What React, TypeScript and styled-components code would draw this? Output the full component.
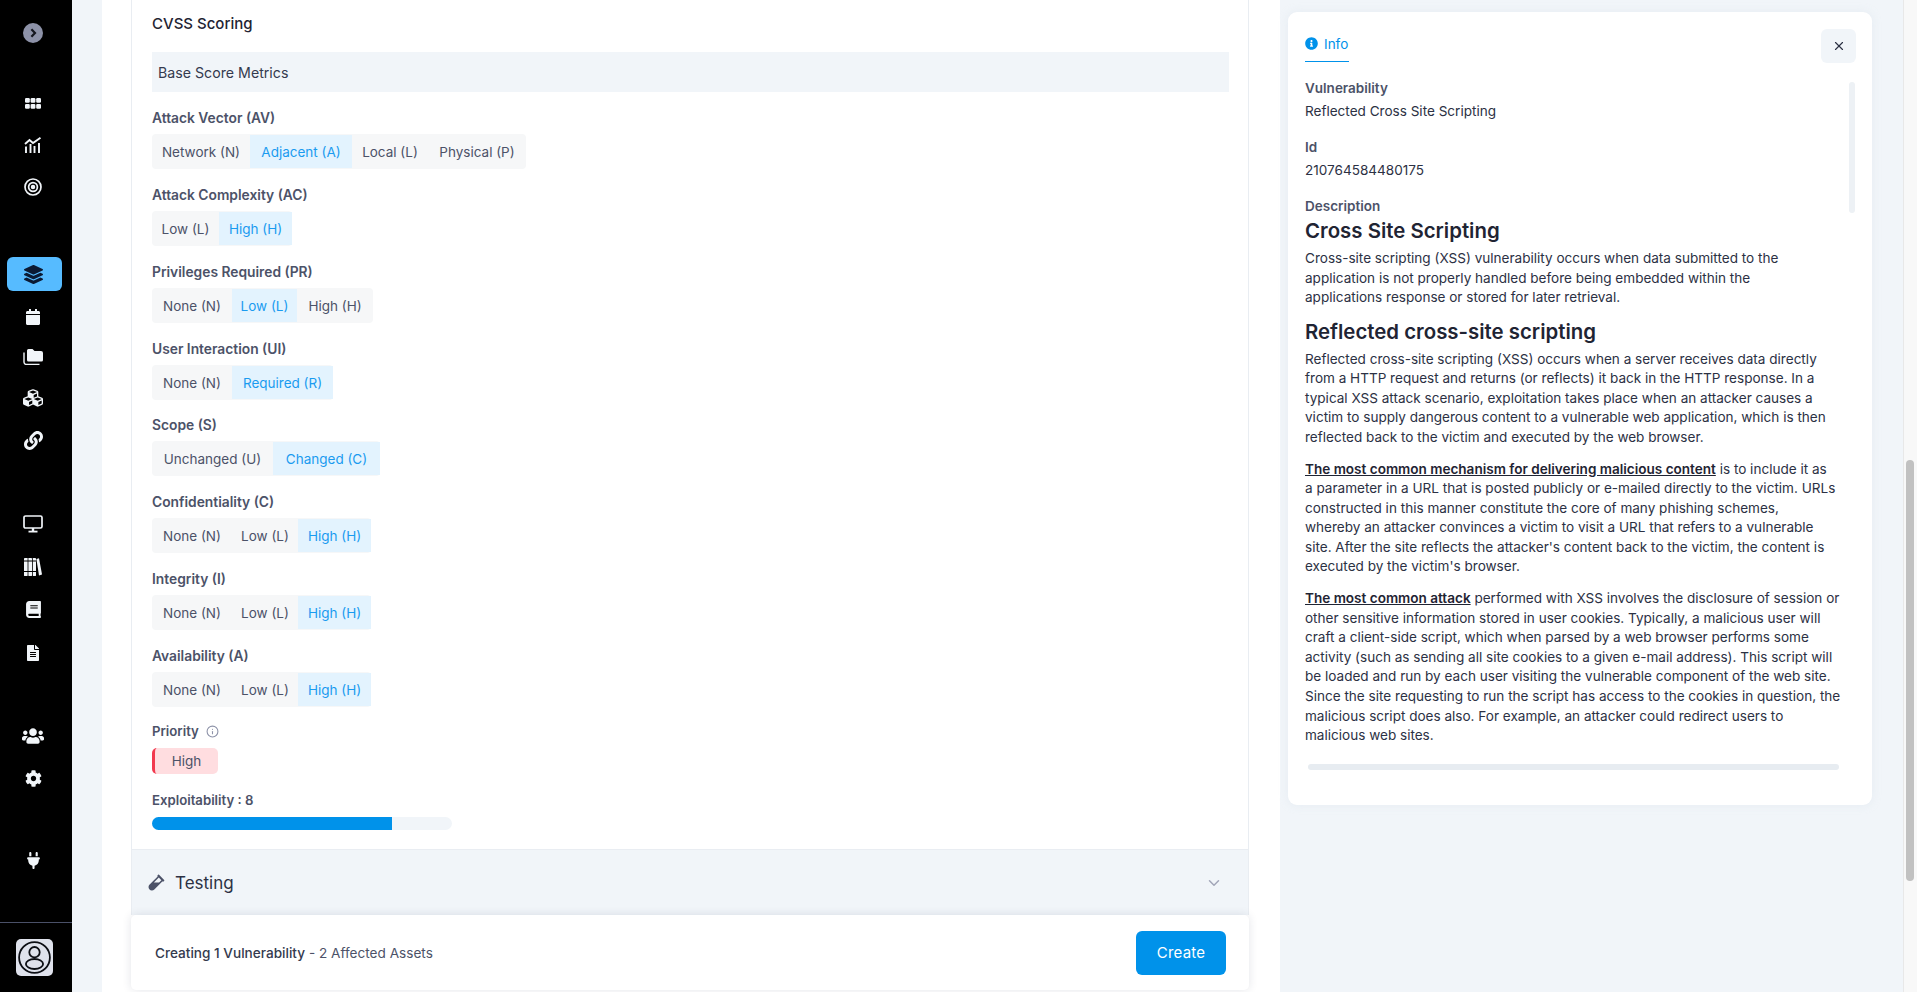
import React from "react";
import styled, { createGlobalStyle } from "styled-components";
import { FaLayerGroup, FaCalendar, FaCubes, FaLink, FaBook, FaFileAlt, FaUsers, FaCog, FaVial, FaInfoCircle } from "react-icons/fa";
import { FaPlug } from "react-icons/fa6";
import { FiChevronDown, FiX, FiInfo } from "react-icons/fi";

const FONT = `"Inter", "Noto Sans", "Liberation Sans", sans-serif`;

const Global = createGlobalStyle`
  html, body { margin: 0; padding: 0; height: 100%; overflow: hidden; background: #f1f5f9; }
  body { font-family: ${FONT}; color: #1f2433; }
  * { box-sizing: border-box; }
`;

const Page = styled.div`
  display: flex;
  width: 1917px;
  height: 992px;
  overflow: hidden;
`;

const Sidebar = styled.nav`
  width: 72px;
  flex: none;
  background: #000;
  display: flex;
  flex-direction: column;
  align-items: center;
  color: #f1f5f9;
`;

const Toggle = styled.div`
  width: 20px;
  height: 20px;
  margin-top: 23px;
  margin-right: 6px;
  border-radius: 50%;
  background: #8d92a8;
  color: #15171f;
  display: flex;
  align-items: center;
  justify-content: center;
  flex: none;
`;

const NavGroup = styled.div<{ $top: number }>`
  margin-top: ${(p) => p.$top}px;
  display: flex;
  flex-direction: column;
  align-items: center;
  width: 100%;
  flex: none;
`;

const NavItem = styled.div<{ $h?: number; $active?: boolean; $gap?: number }>`
  width: 55px;
  height: ${(p) => p.$h ?? 42}px;
  margin-bottom: ${(p) => p.$gap ?? 0}px;
  margin-right: 3px;
  border-radius: 6px;
  background: ${(p) => (p.$active ? "#56bbff" : "transparent")};
  color: ${(p) => (p.$active ? "#0b1a33" : "#f1f5f9")};
  display: flex;
  align-items: center;
  justify-content: center;
  padding-right: 3px;
  flex: none;
`;

const SideFoot = styled.div`
  margin-top: auto;
  width: 100%;
  height: 70px;
  border-top: 1px solid #4a5068;
  display: flex;
  align-items: center;
  justify-content: center;
  flex: none;
`;

const Avatar = styled.div`
  width: 37px;
  height: 37px;
  border-radius: 5px;
  background: #dfe2ec;
  margin-right: 3px;
  display: flex;
  align-items: center;
  justify-content: center;
`;

const Gutter = styled.div`
  width: 30px;
  flex: none;
  background: #f1f5f9;
`;

const Main = styled.main`
  width: 1178px;
  flex: none;
  background: #fff;
  padding-left: 29px;
  height: 992px;
  display: flex;
  flex-direction: column;
`;

const Card = styled.section`
  width: 1118px;
  height: 915px;
  flex: none;
  border: 1px solid #e9edf2;
  border-top: none;
  border-bottom: none;
  display: flex;
  flex-direction: column;
  overflow: hidden;
`;

const Body = styled.div`
  flex: 1;
  padding: 14px 19px 0 20px;
  display: flex;
  flex-direction: column;
  align-items: flex-start;
`;

const Title = styled.h2`
  margin: 0;
  font-size: 15px;
  line-height: 20px;
  font-weight: 500;
  color: #1f2433;
  height: 38px;
`;

const MetricsBar = styled.div`
  width: 100%;
  height: 40px;
  flex: none;
  background: #f1f5f9;
  padding-left: 6px;
  display: flex;
  align-items: center;
  font-size: 14.2px;
  color: #343a4e;
  margin-bottom: 15px;
`;

const Metric = styled.div<{ $h: number }>`
  height: ${(p) => p.$h}px;
  flex: none;
`;

const MetricLabel = styled.div`
  font-size: 13.8px;
  line-height: 22px;
  height: 27px;
  font-weight: 600;
  color: #4c5268;
`;

const Segments = styled.div`
  display: inline-flex;
  background: #f6f7f8;
  border-radius: 4px;
  height: 35px;
  padding: 1px 0;
`;

const Segment = styled.div<{ $on?: boolean; $w: number }>`
  width: ${(p) => p.$w}px;
  display: flex;
  align-items: center;
  justify-content: center;
  font-size: 13.5px;
  white-space: nowrap;
  color: ${(p) => (p.$on ? "#1a9bf0" : "#4c5268")};
  background: ${(p) => (p.$on ? "#e3f3fe" : "transparent")};
`;

const PriorityLabel = styled(MetricLabel)`
  display: flex;
  align-items: center;
  gap: 7px;
  height: 20px;
  margin-top: -1px;
  font-size: 13.2px;
  svg { color: #8d92a8; }
`;

const PriorityBadge = styled.div`
  margin-top: 7px;
  width: 66px;
  height: 26px;
  flex: none;
  border-radius: 5px;
  border-left: 3px solid #f2394e;
  background: #ffdde0;
  display: flex;
  align-items: center;
  justify-content: center;
  font-size: 13.5px;
  color: #4c5268;
`;

const ExploitLabel = styled(MetricLabel)`
  margin-top: 16px;
  font-size: 13.2px;
  line-height: 20px;
`;

const Track = styled.div`
  width: 300px;
  height: 13px;
  flex: none;
  border-radius: 7px;
  background: #f1f5f9;
  overflow: hidden;
`;

const Fill = styled.div`
  height: 100%;
  background: #0092ea;
`;

const Accordion = styled.div`
  height: 66px;
  flex: none;
  background: #f1f5f9;
  border-top: 1px solid #e9edf2;
  padding: 0 25px 0 16px;
  display: flex;
  align-items: center;
  gap: 10px;
  font-size: 17px;
  color: #2c3144;
  svg:first-child { color: #4c5268; }
  svg:last-child { color: #a2a6b8; margin-left: auto; }
`;

const Footer = styled.footer`
  width: 1118px;
  height: 75px;
  flex: none;
  background: #fff;
  border-radius: 5px;
  box-shadow: 0 0 10px rgba(30, 40, 70, 0.12);
  position: relative;
  padding: 0 23px 0 24px;
  display: flex;
  align-items: center;
  justify-content: space-between;
  font-size: 13.6px;
  color: #4c5268;
`;

const FooterStrong = styled.span`
  font-weight: 500;
  color: #343a4e;
`;

const Primary = styled.button`
  width: 90px;
  height: 44px;
  border: none;
  border-radius: 6px;
  background: #0092ea;
  color: #fff;
  font: 400 15px ${FONT};
  letter-spacing: 0.2px;
`;

const Aside = styled.aside`
  flex: 1;
  background: #f1f5f9;
  padding: 12px 31px 0 8px;
`;

const Panel = styled.div`
  height: 793px;
  background: #fff;
  border-radius: 9px;
  box-shadow: 0 0 8px rgba(225, 232, 240, 0.7);
  padding: 17px 15px 0 17px;
  display: flex;
  flex-direction: column;
`;

const PanelHead = styled.div`
  display: flex;
  justify-content: space-between;
  align-items: flex-start;
  height: 53px;
  flex: none;
`;

const Tab = styled.div`
  height: 33px;
  width: 44px;
  border-bottom: 1px solid #0092ea;
  color: #0092ea;
  display: flex;
  align-items: flex-start;
  padding-top: 6px;
  gap: 6px;
  font-size: 13.5px;
  line-height: 18px;
  svg { margin-top: 2px; flex: none; }
`;

const CloseBtn = styled.div`
  width: 35px;
  height: 34px;
  margin-right: 1px;
  border-radius: 6px;
  background: #f1f5f9;
  color: #2c3144;
  display: flex;
  align-items: center;
  justify-content: center;
`;

const PanelBody = styled.div`
  position: relative;
  flex: 1;
  margin-right: 2px;
  font-size: 13.55px;
  line-height: 19.55px;
  color: #2c3144;
`;

const FieldLabel = styled.div<{ $h?: number }>`
  font-size: 13.5px;
  line-height: 24px;
  font-weight: 600;
  color: #4c5268;
  height: ${(p) => p.$h ?? 24}px;
`;

const Fields = styled.div`
  margin-top: -6px;
`;

const FieldValue = styled.div`
  line-height: 22px;
  margin-bottom: 13px;
`;

const H = styled.h3`
  margin: 0 0 6px;
  font-size: 20.4px;
  line-height: 24px;
  font-weight: 600;
  color: #1f2433;
`;

const P = styled.p`
  margin: 0 0 12.2px;
`;

const Line = styled.span`
  display: block;
  white-space: nowrap;
`;

const Mark = styled.strong`
  font-weight: 600;
  text-decoration: underline;
  color: #1f2433;
`;

const VThumb = styled.div`
  position: absolute;
  top: 0;
  right: 0;
  width: 6px;
  height: 131px;
  border-radius: 3px;
  background: #edf1f5;
`;

const HThumb = styled.div`
  position: absolute;
  left: 3px;
  top: 682px;
  width: 531px;
  height: 6px;
  border-radius: 3px;
  background: #e7ecf1;
`;

const ScrollTrack = styled.div`
  width: 14px;
  flex: none;
  background: #f8f8f8;
  border-left: 1px solid #e8e8e8;
  padding: 460px 3px 0 2px;
`;

const ScrollThumb = styled.div`
  height: 421px;
  border-radius: 4px;
  background: #c1c1c1;
`;

const metrics: { label: string; opts: [string, number][]; on: number; h: number }[] = [
  { label: "Attack Vector (AV)", opts: [["Network (N)", 98], ["Adjacent (A)", 102], ["Local (L)", 76], ["Physical (P)", 98]], on: 1, h: 77 },
  { label: "Attack Complexity (AC)", opts: [["Low (L)", 67], ["High (H)", 73]], on: 1, h: 77 },
  { label: "Privileges Required (PR)", opts: [["None (N)", 80], ["Low (L)", 65], ["High (H)", 76]], on: 1, h: 77 },
  { label: "User Interaction (UI)", opts: [["None (N)", 80], ["Required (R)", 101]], on: 1, h: 76 },
  { label: "Scope (S)", opts: [["Unchanged (U)", 121], ["Changed (C)", 107]], on: 1, h: 77 },
  { label: "Confidentiality (C)", opts: [["None (N)", 80], ["Low (L)", 66], ["High (H)", 73]], on: 2, h: 77 },
  { label: "Integrity (I)", opts: [["None (N)", 80], ["Low (L)", 66], ["High (H)", 73]], on: 2, h: 77 },
  { label: "Availability (A)", opts: [["None (N)", 80], ["Low (L)", 66], ["High (H)", 73]], on: 2, h: 77 },
];

const GridIcon = () => (
  <svg width="16" height="11" viewBox="0 0 16 11" fill="currentColor">
    {[0, 5.6, 11.2].flatMap((x) => [0, 5.9].map((y) => <rect key={`${x}-${y}`} x={x} y={y} width="4.8" height="4.8" rx="1.2" />))}
  </svg>
);
const ChartIcon = () => (
  <svg width="18" height="16" viewBox="0 0 18 16" fill="none" stroke="currentColor" strokeWidth="1.9">
    <path d="M1 7 L5.5 3 L9 6 L16.5 0.8" />
    <path d="M2 9.5V16M6.5 7V16M10.5 9V16M15 6V16" />
  </svg>
);
const TargetIcon = () => (
  <svg width="18" height="18" viewBox="0 0 18 18" fill="none" stroke="currentColor" strokeWidth="1.7">
    <circle cx="9" cy="9" r="8" />
    <circle cx="9" cy="9" r="4.4" />
    <circle cx="9" cy="9" r="1.4" fill="currentColor" />
  </svg>
);
const FoldersIcon = () => (
  <svg width="20" height="16" viewBox="0 0 20 16" fill="currentColor">
    <path d="M4 1.5a1.5 1.5 0 0 1 1.5-1.5h4l2 2h6.5a2 2 0 0 1 2 2v7a1.5 1.5 0 0 1-1.5 1.5h-13A1.5 1.5 0 0 1 4 11z" />
    <path d="M1 3.5v9.5a2.5 2.5 0 0 0 2.5 2.5h13" fill="none" stroke="currentColor" strokeWidth="1.4" />
  </svg>
);
const MonitorIcon = () => (
  <svg width="20" height="18" viewBox="0 0 20 18" fill="none" stroke="currentColor" strokeWidth="1.7">
    <rect x="1" y="1" width="18" height="12" rx="1.6" />
    <path d="M5.5 16.6h9" strokeWidth="1.8" />
    <path d="M10 13v3.4" strokeWidth="2.4" />
  </svg>
);
const ShelfIcon = () => (
  <svg width="18" height="18" viewBox="0 0 18 18" fill="currentColor">
    <rect x="0" y="0" width="3.6" height="18" rx="0.4" />
    <rect x="4.4" y="0" width="3.6" height="18" rx="0.4" />
    <rect x="8.8" y="0" width="3.2" height="18" rx="0.4" />
    <path d="M12.4 1l2.6-.8 3 16.4-3 .8z" />
    <path d="M0 3h12M0 13.5h12" stroke="#000" strokeWidth="1" />
  </svg>
);
const AvatarIcon = () => (
  <svg width="33" height="33" viewBox="0 0 33 33" fill="none" stroke="#0c0e14" strokeWidth="1.8">
    <circle cx="16.5" cy="16.5" r="15.4" />
    <circle cx="16.5" cy="11.2" r="5.2" />
    <ellipse cx="16.5" cy="23" rx="8.6" ry="5" />
  </svg>
);

const para1 = [
  "Cross-site scripting (XSS) vulnerability occurs when data submitted to the",
  "application is not properly handled before being embedded within the",
  "applications response or stored for later retrieval.",
];
const para2 = [
  "Reflected cross-site scripting (XSS) occurs when a server receives data directly",
  "from a HTTP request and returns (or reflects) it back in the HTTP response. In a",
  "typical XSS attack scenario, exploitation takes place when an attacker causes a",
  "victim to supply dangerous content to a vulnerable web application, which is then",
  "reflected back to the victim and executed by the web browser.",
];
const para3 = [
  "a parameter in a URL that is posted publicly or e-mailed directly to the victim. URLs",
  "constructed in this manner constitute the core of many phishing schemes,",
  "whereby an attacker convinces a victim to visit a URL that refers to a vulnerable",
  "site. After the site reflects the attacker's content back to the victim, the content is",
  "executed by the victim's browser.",
];
const para4 = [
  "other sensitive information stored in user cookies. Typically, a malicious user will",
  "craft a client-side script, which when parsed by a web browser performs some",
  "activity (such as sending all site cookies to a given e-mail address). This script will",
  "be loaded and run by each user visiting the vulnerable component of the web site.",
  "Since the site requesting to run the script has access to the cookies in question, the",
  "malicious script does also. For example, an attacker could redirect users to",
  "malicious web sites.",
];

export default function App() {
  return (
    <Page>
      <Global />
      <Sidebar>
        <Toggle>
          <svg width="10" height="10" viewBox="0 0 10 10" fill="none" stroke="currentColor" strokeWidth="2.2"><path d="M3.4 1.2 7 5 3.4 8.8" /></svg>
        </Toggle>
        <NavGroup $top={39}>
          <NavItem><GridIcon /></NavItem>
          <NavItem><ChartIcon /></NavItem>
          <NavItem><TargetIcon /></NavItem>
        </NavGroup>
        <NavGroup $top={49}>
          <NavItem $active $h={34} $gap={5}><FaLayerGroup size={19} /></NavItem>
          <NavItem $h={41}><FaCalendar size={16} /></NavItem>
          <NavItem $h={40}><FoldersIcon /></NavItem>
          <NavItem $h={42}><FaCubes size={20} /></NavItem>
          <NavItem $h={43}><FaLink size={19} /></NavItem>
        </NavGroup>
        <NavGroup $top={40}>
          <NavItem $h={43}><MonitorIcon /></NavItem>
          <NavItem $h={43}><ShelfIcon /></NavItem>
          <NavItem $h={43}><FaBook size={17} /></NavItem>
          <NavItem $h={43}><FaFileAlt size={16} /></NavItem>
        </NavGroup>
        <NavGroup $top={40}>
          <NavItem $h={43}><FaUsers size={22} /></NavItem>
          <NavItem $h={43}><FaCog size={17} /></NavItem>
        </NavGroup>
        <NavGroup $top={39}>
          <NavItem><FaPlug size={17} /></NavItem>
        </NavGroup>
        <SideFoot><Avatar><AvatarIcon /></Avatar></SideFoot>
      </Sidebar>
      <Gutter />
      <Main>
        <Card>
          <Body>
            <Title>CVSS Scoring</Title>
            <MetricsBar>Base Score Metrics</MetricsBar>
            {metrics.map((m) => (
              <Metric key={m.label} $h={m.h}>
                <MetricLabel>{m.label}</MetricLabel>
                <Segments>
                  {m.opts.map(([t, w], i) => (
                    <Segment key={t} $w={w} $on={i === m.on}>{t}</Segment>
                  ))}
                </Segments>
              </Metric>
            ))}
            <PriorityLabel>Priority <FiInfo size={13} /></PriorityLabel>
            <PriorityBadge>High</PriorityBadge>
            <ExploitLabel>Exploitability : 8</ExploitLabel>
            <Track><Fill style={{ width: "80%" }} /></Track>
          </Body>
          <Accordion>
            <FaVial size={17} />
            Testing
            <FiChevronDown size={18} />
          </Accordion>
        </Card>
        <Footer>
          <span><FooterStrong>Creating 1 Vulnerability</FooterStrong> - 2 Affected Assets</span>
          <Primary>Create</Primary>
        </Footer>
      </Main>
      <Aside>
        <Panel>
          <PanelHead>
            <Tab><FaInfoCircle size={13} /> Info</Tab>
            <CloseBtn><FiX size={14} /></CloseBtn>
          </PanelHead>
          <PanelBody>
            <VThumb />
            <HThumb />
            <Fields>
              <FieldLabel>Vulnerability</FieldLabel>
              <FieldValue>Reflected Cross Site Scripting</FieldValue>
              <FieldLabel>Id</FieldLabel>
              <FieldValue>210764584480175</FieldValue>
              <FieldLabel $h={25}>Description</FieldLabel>
            </Fields>
            <H>Cross Site Scripting</H>
            <P>{para1.map((l) => <Line key={l}>{l}</Line>)}</P>
            <H>Reflected cross-site scripting</H>
            <P>{para2.map((l) => <Line key={l}>{l}</Line>)}</P>
            <P>
              <Line><Mark>The most common mechanism for delivering malicious content</Mark> is to include it as</Line>
              {para3.map((l) => <Line key={l}>{l}</Line>)}
            </P>
            <P>
              <Line><Mark>The most common attack</Mark> performed with XSS involves the disclosure of session or</Line>
              {para4.map((l) => <Line key={l}>{l}</Line>)}
            </P>
          </PanelBody>
        </Panel>
      </Aside>
      <ScrollTrack><ScrollThumb /></ScrollTrack>
    </Page>
  );
}
